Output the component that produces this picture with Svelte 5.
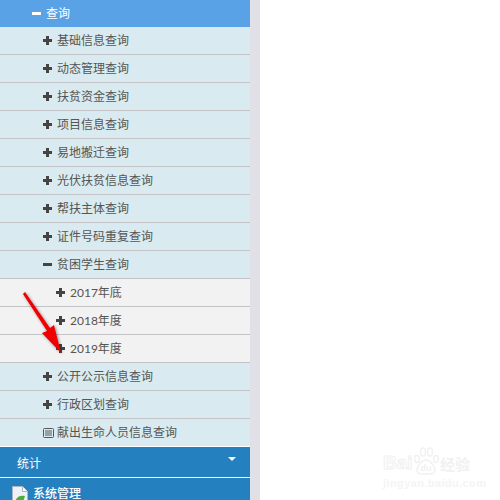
<script lang="ts">
  const topItems = ["基础信息查询", "动态管理查询", "扶贫资金查询", "项目信息查询", "易地搬迁查询", "光伏扶贫信息查询", "帮扶主体查询", "证件号码重复查询"];
  const years = ["2017年底", "2018年度", "2019年度"];
  const lowItems = ["公开公示信息查询", "行政区划查询"];
</script>

<div class="page">
  <nav class="sidebar">
    <div class="head"><span class="minus light"></span>查询</div>
    <ul>
      {#each topItems as item}
        <li class="row"><span class="plus"></span>{item}</li>
      {/each}
      <li class="row"><span class="minus"></span>贫困学生查询</li>
      {#each years as y}
        <li class="row sub"><span class="plus"></span>{y}</li>
      {/each}
      {#each lowItems as item}
        <li class="row"><span class="plus"></span>{item}</li>
      {/each}
      <li class="row last">
        <svg class="card" width="11" height="10" viewBox="0 0 11 10">
          <rect x="0.5" y="0.5" width="10" height="9" rx="1" fill="none" stroke="#555" />
          <path d="M2 3h7M2 5h7M2 7h7" stroke="#555" stroke-width="1" />
        </svg>献出生命人员信息查询
      </li>
    </ul>
    <div class="group">统计<span class="caret"></span></div>
    <div class="group sys">
      <svg class="broken" width="16" height="16" viewBox="0 0 16 16">
        <path d="M0.5 0.5h10l5 5v10.5H0.5z" fill="#eef2f8" stroke="#a9b6c6" />
        <path d="M10.5 0.5v5h5" fill="#fff" stroke="#a9b6c6" />
        <path d="M3 16c1-5 5-7 10-6l-2 6z" fill="#4caf3c" />
      </svg>系统管理
    </div>
  </nav>
  <div class="gutter"></div>

  <svg class="arrow" width="50" height="70" viewBox="0 0 50 70">
    <defs>
      <filter id="shade" x="-30%" y="-30%" width="160%" height="160%">
        <feDropShadow dx="1" dy="1" stdDeviation="1.5" flood-color="#000" flood-opacity="0.45" />
      </filter>
    </defs>
    <path d="M1 3 L3 1 L28 37 L32 34 L39 62 L20 42 L25 40 Z" fill="#f00000" filter="url(#shade)" />
  </svg>

  <div class="mark">
    <div class="mark-top">
      <span class="bai">Bai</span>
      <svg class="paw" width="26" height="28" viewBox="0 0 26 28">
        <g fill="none" stroke="#f1f1f1" stroke-width="1.5">
          <ellipse cx="4" cy="12" rx="2.5" ry="3.5" />
          <ellipse cx="10" cy="5" rx="2.5" ry="4" />
          <ellipse cx="17" cy="5" rx="2.5" ry="4" />
          <ellipse cx="23" cy="12" rx="2.5" ry="3.5" />
          <path d="M13 13c-4 0-9 6-9 10 0 5 6 4 9 4s9 1 9-4c0-4-5-10-9-10z" />
        </g>
        <text x="13" y="24" text-anchor="middle" class="du">du</text>
      </svg>
      <span class="jy">经验</span>
    </div>
    <div class="mark-url">jingyan.baidu.com</div>
  </div>
</div>

<style>
  :global(body) {
    margin: 0;
    background: #fff;
  }

  .page {
    position: relative;
    display: flex;
    width: 500px;
    height: 500px;
    overflow: hidden;
    font-family: "Noto Sans CJK SC", "Liberation Sans", sans-serif;
  }

  .sidebar {
    width: 250px;
    flex: none;
  }

  .gutter {
    width: 10px;
    background: #e0e0e6;
  }

  ul {
    list-style: none;
    margin: 0;
    padding: 0;
  }

  .head {
    display: flex;
    align-items: center;
    box-sizing: border-box;
    height: 27px;
    padding: 0 0 2px 32px;
    background: #5aa2e6;
    color: #fff;
    font-size: 12px;
  }

  .row {
    display: flex;
    align-items: center;
    box-sizing: border-box;
    height: 28px;
    padding: 0 0 2px 43px;
    background: #d9ebf0;
    border-bottom: 1px solid #c4c4c8;
    color: #555;
    font-size: 12px;
  }

  .row.last {
    border-bottom: 1px solid #fff;
  }

  .row.sub {
    padding-left: 56px;
    background: #f2f2f2;
    font-family: "Lato", "Noto Sans CJK SC", sans-serif;
  }

  .plus,
  .minus {
    position: relative;
    flex: none;
    width: 9px;
    height: 9px;
    margin: 2px 5px 0 0;
  }

  .plus::before,
  .minus::before {
    content: "";
    position: absolute;
    left: 0;
    top: 3px;
    width: 9px;
    height: 3px;
    background: #444;
  }

  .plus::after {
    content: "";
    position: absolute;
    left: 3px;
    top: 0;
    width: 3px;
    height: 9px;
    background: #444;
  }

  .minus.light::before {
    background: #fff;
  }

  .card {
    flex: none;
    margin: 2px 3px 0 0;
  }

  .group {
    position: relative;
    display: flex;
    align-items: center;
    height: 30px;
    padding-left: 17px;
    background: #2580bf;
    border-bottom: 1px solid #fff;
    color: #fff;
    font-size: 12px;
  }

  .group.sys {
    height: 22px;
    align-items: flex-start;
    padding: 8px 0 0 12px;
    gap: 5px;
    border-bottom: 0;
    line-height: 14px;
    font-weight: 500;
  }

  .caret {
    position: absolute;
    right: 14px;
    top: 10px;
    border: 4px solid transparent;
    border-top: 4px solid #fff;
  }

  .arrow {
    position: absolute;
    left: 22px;
    top: 291px;
  }

  .mark {
    position: absolute;
    left: 383px;
    top: 447px;
    width: 90px;
    color: #f1f1f1;
    font-family: "Liberation Sans", "Noto Sans CJK SC", sans-serif;
  }

  .mark-top {
    display: flex;
    align-items: flex-end;
    height: 28px;
  }

  .bai {
    width: 30px;
    font-size: 19px;
    line-height: 24px;
    font-weight: 700;
    color: #fff;
    -webkit-text-stroke: 1px #f1f1f1;
  }

  .paw {
    flex: none;
  }

  .du {
    font-size: 9px;
    font-weight: 700;
    fill: #f1f1f1;
  }

  .jy {
    margin-left: 1px;
    font-size: 15px;
    line-height: 22px;
    font-weight: 700;
    font-family: "Noto Sans CJK SC", sans-serif;
  }

  .mark-url {
    margin-top: 2px;
    font-size: 11px;
    line-height: 12px;
    font-weight: 700;
    letter-spacing: 0.4px;
    color: #f4f4f4;
    white-space: nowrap;
  }
</style>
